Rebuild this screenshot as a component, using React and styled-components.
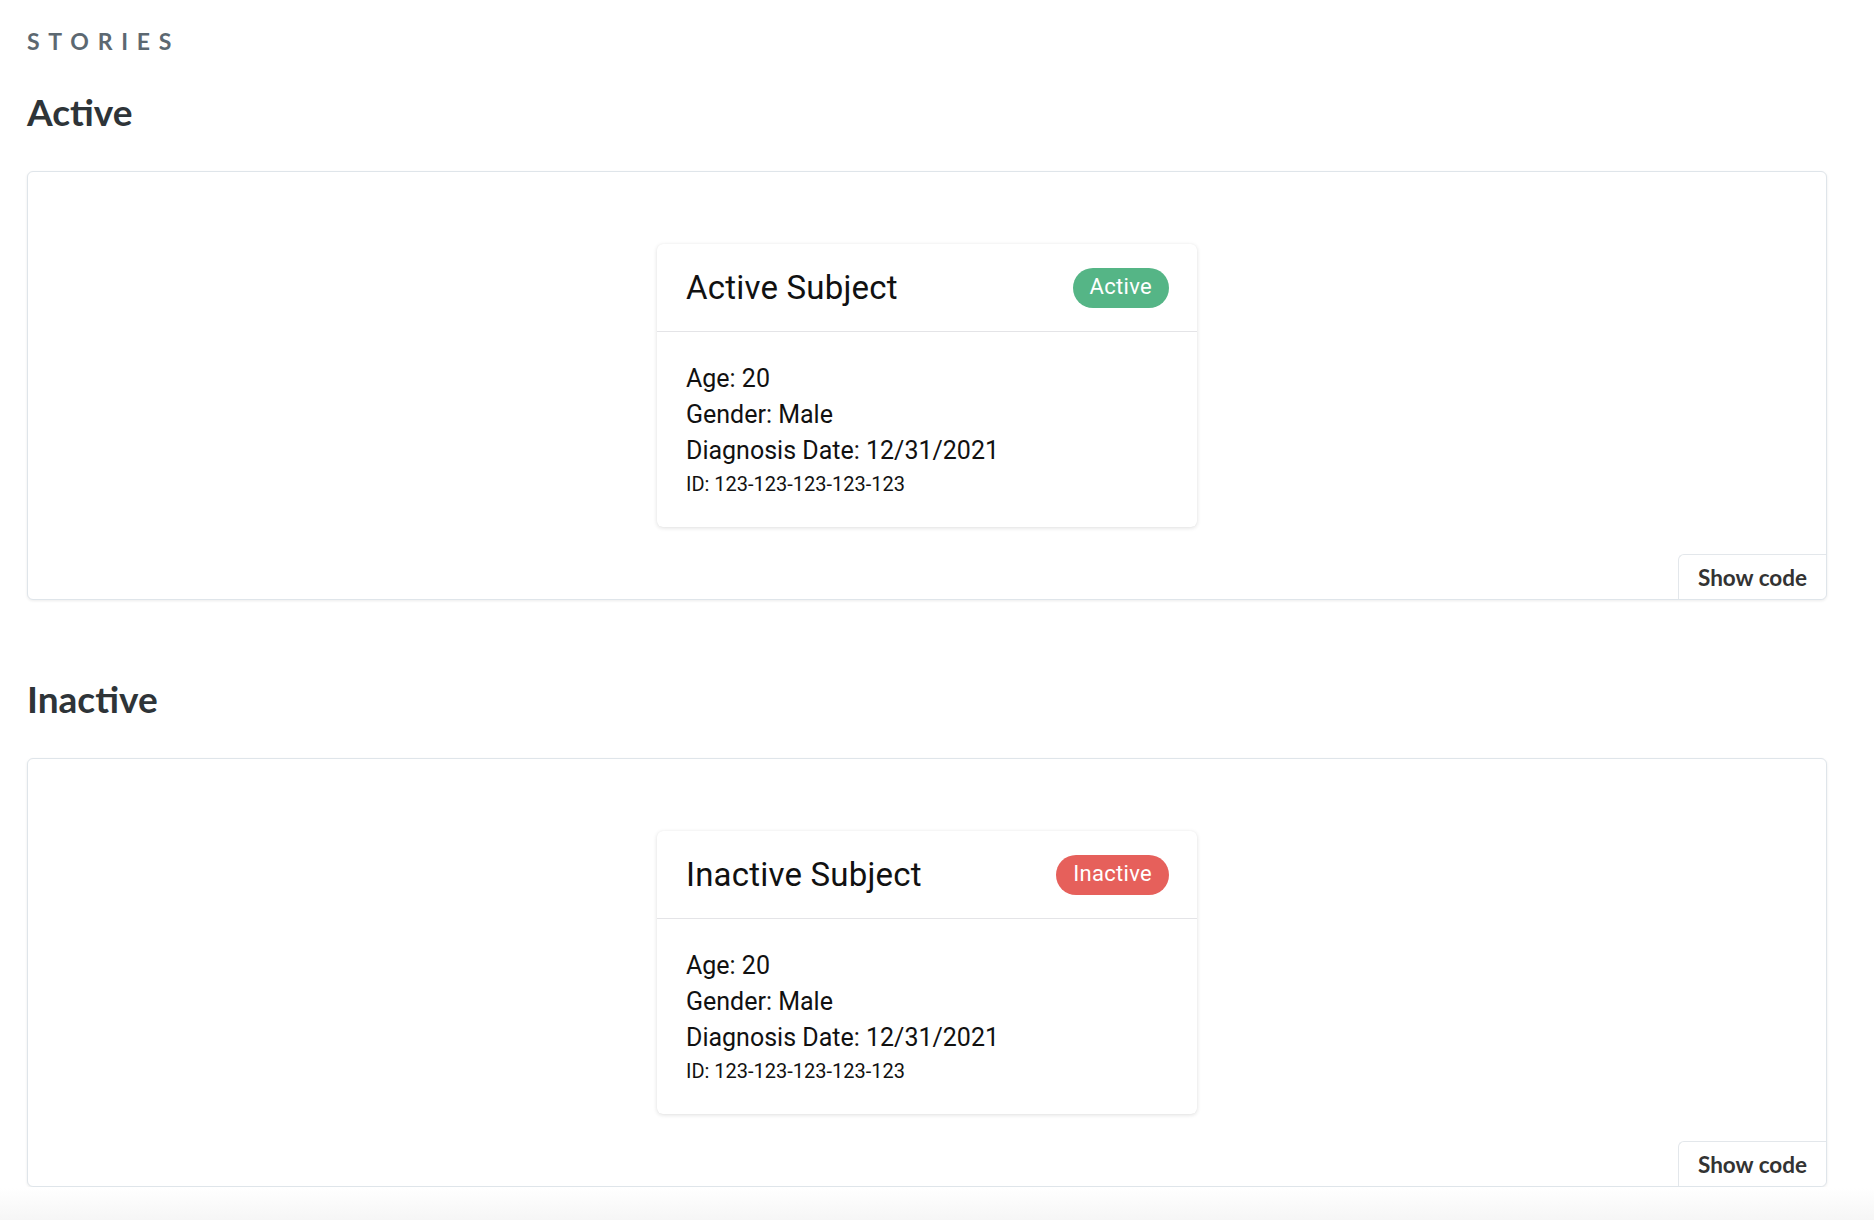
import React from "react";
import styled, { createGlobalStyle } from "styled-components";

const Global = createGlobalStyle`
  html {
    min-height: 100%;
    background: linear-gradient(to bottom, #ffffff 0, #ffffff 1188px, #f6f6f6 1220px);
    background-repeat: no-repeat;
  }
  body {
    margin: 0;
    background: transparent;
    font-family: "Noto Sans", Roboto, sans-serif;
  }
  * { box-sizing: border-box; }
`;

const Page = styled.main`
  padding: 27px 47px 0 27px;
`;

const Eyebrow = styled.div`
  font-family: Lato, "Open Sans", sans-serif;
  font-weight: 700;
  font-size: 23px;
  line-height: 28px;
  letter-spacing: 0.38em;
  text-transform: uppercase;
  color: #5c6871;
`;

const Heading = styled.h2`
  margin: ${(p) => (p.$first ? "36px" : "78px")} 0 38px;
  font-family: Lato, "Open Sans", sans-serif;
  font-weight: 700;
  font-size: 37px;
  line-height: 42px;
  color: #2e3438;
`;

const Preview = styled.section`
  position: relative;
  display: flex;
  justify-content: center;
  padding: 72px 0;
  border: 1px solid #dfe5ea;
  border-radius: 6px;
  background: #fff;
  box-shadow: 0 1px 3px rgba(0, 0, 0, 0.08);
`;

const ShowCode = styled.button`
  position: absolute;
  right: 0;
  bottom: 0;
  width: 148px;
  height: 45px;
  padding: 0;
  border: none;
  border-top: 1px solid #e3e7eb;
  border-left: 1px solid #e3e7eb;
  border-radius: 6px 0 6px 0;
  background: #fff;
  font-family: Lato, "Open Sans", sans-serif;
  font-weight: 700;
  font-size: 22.5px;
  color: #333;
  cursor: pointer;
`;

const Card = styled.article`
  width: 540px;
  height: 283px;
  background: #fff;
  border-radius: 6px;
  box-shadow: 0 1px 4px rgba(0, 0, 0, 0.13), 0 0 1px rgba(0, 0, 0, 0.06);
  font-family: Roboto, "Noto Sans", sans-serif;
  color: #111;
`;

const CardHeader = styled.header`
  display: flex;
  align-items: center;
  justify-content: space-between;
  height: 88px;
  padding: 0 28px 0 29px;
  border-bottom: 1px solid #e4e4e7;
`;

const Title = styled.h3`
  margin: 0;
  font-weight: 400;
  font-size: 33px;
  letter-spacing: 0.2px;
`;

const Badge = styled.span`
  display: inline-block;
  height: 40px;
  padding: 0 17px;
  border-radius: 20px;
  background: ${(p) => (p.$active ? "#55b586" : "#e6605b")};
  color: #fff;
  font-size: 22px;
  line-height: 37px;
  letter-spacing: 0.3px;
`;

const CardBody = styled.div`
  padding: 29px 29px 0;
`;

const Line = styled.div`
  font-size: 25px;
  line-height: 36px;
`;

const Id = styled.div`
  margin-top: 3px;
  font-size: 20px;
  line-height: 24px;
`;

function SubjectCard({ name, active }) {
  return (
    <Card>
      <CardHeader>
        <Title>{name}</Title>
        <Badge $active={active}>{active ? "Active" : "Inactive"}</Badge>
      </CardHeader>
      <CardBody>
        <Line>Age: 20</Line>
        <Line>Gender: Male</Line>
        <Line>Diagnosis Date: 12/31/2021</Line>
        <Id>ID: 123-123-123-123-123</Id>
      </CardBody>
    </Card>
  );
}

export default function App() {
  return (
    <>
      <Global />
      <Page>
        <Eyebrow>Stories</Eyebrow>
        <Heading $first>Active</Heading>
        <Preview>
          <SubjectCard name="Active Subject" active />
          <ShowCode>Show code</ShowCode>
        </Preview>
        <Heading>Inactive</Heading>
        <Preview>
          <SubjectCard name="Inactive Subject" active={false} />
          <ShowCode>Show code</ShowCode>
        </Preview>
      </Page>
    </>
  );
}
